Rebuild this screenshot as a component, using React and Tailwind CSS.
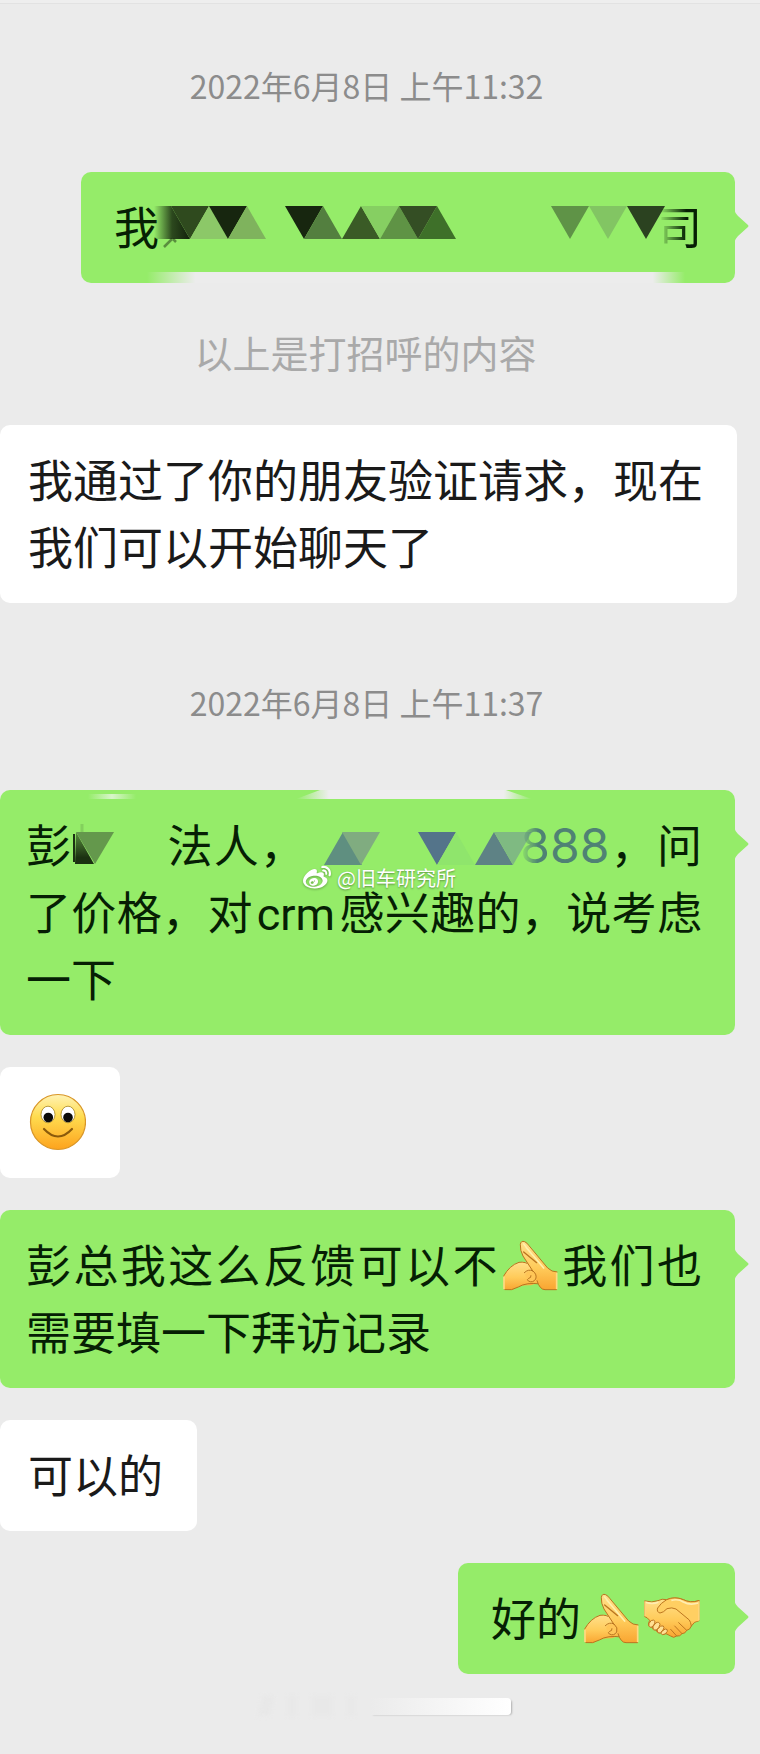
import { FaWeibo } from "react-icons/fa";

const FONT = "font-['Noto_Sans_CJK_SC','Noto_Sans',sans-serif]";

function Stamp({ children, className = "" }) {
  return <time className={`block pr-[2px] text-center text-[32px] leading-[48px] text-[#8c8c8c] ${className}`}>{children}</time>;
}

function Sent({ children, cut = false, overlay }) {
  return (
    <li className={`relative rounded-[10px] bg-[#95ec69] pt-[20px] pr-[33px] pb-[24px] text-[#061f04] ${cut ? "w-full pl-[26px]" : "self-end pl-[33px]"}`}>
      <svg className="absolute top-[37px] -right-[14px] h-[34px] w-[15px]" viewBox="0 0 15 34" aria-hidden="true">
        <path d="M0 0Q1 4 4 7L14 16Q15 17 14 18L4 27Q1 30 0 34Z" fill="#95ec69" />
      </svg>
      {overlay}
      <div>{children}</div>
    </li>
  );
}

function Received({ children, wide = false }) {
  return (
    <li className={`rounded-[10px] bg-white pt-[20px] pr-[34px] pb-[24px] pl-[28px] text-[#1a1a1a] ${wide ? "-mr-[2px] self-stretch" : "self-start"}`}>
      <p className="text-justify">{children}</p>
    </li>
  );
}

function Line({ children }) {
  return <p className="text-justify [text-align-last:justify]">{children}</p>;
}

// each entry: direction, left x, fill
function Tiles({ items, top }) {
  return items.map(([dir, x, fill]) => (
    <path
      key={`${dir}${x}`}
      fill={fill}
      d={dir === "down" ? `M${x} ${top}h38l-19 33z` : `M${x} ${top + 33}h38l-19 -33z`}
    />
  ));
}

const COMPANY_TILES = [
  ["down", 171, "#2f4a1e"],
  ["up", 190, "#8cc868"],
  ["down", 209, "#17260f"],
  ["up", 228, "#7fb35d"],
  ["down", 285, "#17260f"],
  ["up", 304, "#537f3f"],
  ["up", 342, "#3a5b26"],
  ["down", 361, "#86cf62"],
  ["up", 380, "#5f9345"],
  ["up", 418, "#3e7029"],
  ["down", 399, "#344e24"],
  ["down", 551, "#5f9347"],
  ["down", 589, "#82c563"],
  ["down", 627, "#2b4220"],
];

const PHONE_TILES = [
  ["up", 324, "#5f8f80"],
  ["down", 342, "#80ac80"],
  ["down", 418, "#54748a"],
  ["up", 437, "#8fe56c"],
  ["up", 475, "#5e8285"],
  ["down", 494, "#7fba82"],
];

function Gold({ id }) {
  return (
    <linearGradient id={id} x1="0" y1="0" x2="0" y2="1">
      <stop offset="0" stopColor="#ffe08c" />
      <stop offset="0.55" stopColor="#ffcb5a" />
      <stop offset="1" stopColor="#f9a531" />
    </linearGradient>
  );
}

function Fist({ id }) {
  return (
    <svg className="mr-[2px] ml-[3px] inline-block h-[67px] w-[55px] align-top" viewBox="0 -30 165 201" role="img" aria-label="抱拳">
      <defs><Gold id={id} /></defs>
      <g stroke="#b97420" strokeWidth="3" strokeLinejoin="round" strokeLinecap="round">
        <path fill={`url(#${id})`} stroke="none" d="M2 108Q20 76 48 67Q76 60 90 84L112 126L84 136Q50 134 28 150L4 149Z" />
        <path fill="none" d="M2 108Q20 76 48 67Q68 64 80 75M112 132Q70 126 46 141Q26 153 6 149" />
        <path fill={`url(#${id})`} stroke="none" d="M52 14Q53 1 65 5Q72 8 78 17L134 84Q146 96 162 96V149H122Q112 146 106 132L96 108L60 48Q51 31 52 14Z" />
        <path fill="none" d="M162 96Q146 96 134 84L78 17Q72 8 65 5Q53 1 52 14Q51 31 60 48L90 94M102 122Q110 149 126 149H160" />
        <path fill="none" d="M62 36L101 68" strokeWidth="4" />
        <path fill="#ffc658" stroke="none" d="M66 104Q74 89 88 95Q101 106 97 118Q86 132 73 122Z" />
        <path fill="none" d="M64 98Q76 86 90 93Q103 104 98 117Q90 130 76 123Q70 119 77 115Q85 114 84 107" />
      </g>
      <path d="M62 12Q67 17 71 24L122 84" fill="none" stroke="#fff0ae" strokeWidth="5" strokeLinecap="round" />
      <path d="M161 98V147M3 110V147" stroke="#ffd982" strokeWidth="5" />
    </svg>
  );
}

function Handshake() {
  return (
    <svg className="mr-[2px] ml-[3px] inline-block h-[67px] w-[56px] align-top" viewBox="0 -43 168 201" role="img" aria-label="握手">
      <defs><Gold id="shake" /></defs>
      <g stroke="#bd7620" strokeWidth="3" strokeLinejoin="round" strokeLinecap="round">
        <path fill="url(#shake)" d="M3 11Q24 17 42 10Q54 3 68 7Q94 -3 118 7Q138 18 165 10V70Q150 72 142 86Q138 98 128 99Q124 109 114 109Q108 118 98 116Q89 124 80 116L66 109Q56 114 50 106Q39 109 37 98Q25 100 25 90Q11 90 14 77L17 69Q9 59 3 58Z" />
        <path fill="#ffcf62" stroke="none" d="M68 7Q50 17 41 32Q37 44 48 47Q58 46 69 34Q84 29 96 35L136 68Q146 74 165 70V10Q138 18 118 7Q92 -4 68 7Z" />
        <path fill="none" d="M165 10Q138 18 118 7Q92 -4 68 7Q50 17 41 32Q37 44 48 47Q58 46 69 34Q84 29 96 35L136 68Q140 74 142 86M104 76L128 99M92 86L114 109M80 96L98 116" />
        <path fill="#ffe094" d="M23 69Q30 66 33 72Q34 78 25 89Q12 92 15 79ZM37 76Q46 72 48 81Q46 92 37 98Q25 99 27 88ZM51 86Q60 83 60 91Q57 103 49 107Q38 107 40 97ZM65 95Q72 95 70 102Q65 112 56 112Q48 110 53 102Z" />
      </g>
      <path d="M5 15Q25 22 43 15M82 9Q104 4 118 14Q138 25 163 17" stroke="#ffedb2" strokeWidth="5" fill="none" />
      <path d="M3 12V57M165 12V69" stroke="#ffd982" strokeWidth="4" />
    </svg>
  );
}

function Smile() {
  return (
    <svg className="inline-block h-[67px] w-[58px] align-top" viewBox="-1 -6 58 67" role="img" aria-label="微笑">
      <defs>
        <linearGradient id="face" x1="0" y1="0" x2="0" y2="1">
          <stop offset="0" stopColor="#fff3b5" />
          <stop offset="0.4" stopColor="#ffdc50" />
          <stop offset="1" stopColor="#fda31d" />
        </linearGradient>
      </defs>
      <circle cx="29" cy="29" r="27.5" fill="url(#face)" stroke="#d99628" strokeWidth="1.2" />
      <ellipse cx="19" cy="21.5" rx="7" ry="8.3" fill="#fff" stroke="#a5841f" strokeWidth="0.8" />
      <ellipse cx="39" cy="21.5" rx="7" ry="8.3" fill="#fff" stroke="#a5841f" strokeWidth="0.8" />
      <circle cx="19.3" cy="24.5" r="4.8" fill="#0b0b0b" />
      <circle cx="39" cy="24.5" r="4.8" fill="#0b0b0b" />
      <path d="M15 36Q29 51 43 36" fill="none" stroke="#8a5a0c" strokeWidth="2.2" strokeLinecap="round" />
    </svg>
  );
}

function Watermark() {
  return (
    <div className="absolute top-[73px] left-[303px] flex items-center gap-[6px] text-[20px] leading-[30px] text-white [text-shadow:0_1px_2px_rgb(0_0_0/0.4)]">
      <FaWeibo className="h-[28px] w-[28px] drop-shadow-[0_1px_1px_rgb(0_0_0/0.3)]" />
      <span className="whitespace-nowrap">@旧车研究所</span>
    </div>
  );
}

export default function App() {
  return (
    <main className={`min-h-screen overflow-hidden bg-[#ebebeb] pr-[25px] ${FONT}`}>
      <div className="-mr-[25px] h-[4px] border-b border-[#e2e2e2] bg-[#eeeeee]" />
      <Stamp className="mt-[57px] mb-[63px]">2022年6月8日 上午11:32</Stamp>

      <ol className="flex flex-col text-[45px] leading-[67px]">
        <Sent
          overlay={
            <div className="absolute right-[50px] bottom-0 left-[66px] h-[11px] bg-[linear-gradient(to_right,transparent,#ececec_9%,#ececec_94%,transparent)]" />
          }
        >
          我
          <svg className="inline-block h-[67px] w-[498px] overflow-visible align-top" viewBox="159 192 498 67" aria-hidden="true">
            <defs>
              <linearGradient id="smear" x1="0" x2="1">
                <stop offset="0" stopColor="#12200b" stopOpacity="0" />
                <stop offset="0.5" stopColor="#12200b" stopOpacity="0.8" />
                <stop offset="1" stopColor="#12200b" />
              </linearGradient>
            </defs>
            <path d="M154 206h17l19 33h-36z" fill="url(#smear)" />
            <Tiles items={COMPANY_TILES} top={206} />
            <path d="M172 239l-8 8M173 239l3 3" stroke="#12200b" strokeOpacity="0.45" strokeWidth="2.5" fill="none" />
          </svg>
          <span className="inline-block [mask-image:linear-gradient(to_right,transparent_5%,black_65%)]">司</span>
        </Sent>

        <li className="mt-[45px] mb-[49px] pr-[4px] text-center text-[38px] leading-[48px] text-[#a9a9a9]">以上是打招呼的内容</li>

        <Received wide>我通过了你的朋友验证请求，现在我们可以开始聊天了</Received>
      </ol>

      <Stamp className="mt-[75px] mb-[64px]">2022年6月8日 上午11:37</Stamp>

      <ol className="flex flex-col gap-[32px] text-[45px] leading-[67px]">
        <Sent
          cut
          overlay={
            <>
              <div className="absolute top-[4px] left-[88px] h-[5px] w-[48px] bg-linear-to-r from-transparent via-[#d9f5ca] to-transparent" />
              <svg className="absolute top-0 left-[296px] h-[9px] w-[236px]" viewBox="0 0 236 9" aria-hidden="true">
                <defs>
                  <linearGradient id="wipe">
                    <stop offset="0" stopColor="#eeeeee" stopOpacity="0" />
                    <stop offset="0.14" stopColor="#eeeeee" />
                    <stop offset="0.88" stopColor="#eeeeee" />
                    <stop offset="1" stopColor="#eeeeee" stopOpacity="0" />
                  </linearGradient>
                </defs>
                <path d="M24 0H210L236 9H0Z" fill="url(#wipe)" />
              </svg>
              <Watermark />
            </>
          }
        >
          <Line>
            彭
            <svg className="inline-block h-[67px] w-[94px] align-top" viewBox="72 810 94 67" aria-hidden="true">
              <defs>
                <linearGradient id="ink" x1="0" y1="0" x2="0" y2="1">
                  <stop offset="0" stopColor="#1b3111" stopOpacity="0.5" />
                  <stop offset="0.8" stopColor="#1b3111" />
                </linearGradient>
              </defs>
              <path d="M76 832l18 32h-19z" fill="url(#ink)" />
              <path d="M74 834v28" stroke="#1b3111" strokeWidth="2" />
              <path d="M82 824v8" stroke="#83d05d" strokeWidth="3" />
              <path d="M76 832h38l-19 32z" fill="#64984c" />
            </svg>
            法人，
            <svg className="inline-block h-[67px] w-[214px] overflow-visible align-top" viewBox="306 809 214 67" aria-hidden="true">
              <Tiles items={PHONE_TILES} top={831} />
            </svg>
            <a href="#phone" className="font-['Inter',sans-serif] text-[48px] leading-none text-[#4f8274]">
              <span className="[mask-image:linear-gradient(to_right,transparent,black_60%)]">8</span>88
            </a>
            ，问
          </Line>
          <Line>
            了价格，对<span className="mx-[4px] font-['Roboto',sans-serif] leading-none">crm</span>感兴趣的，说考虑
          </Line>
          <p>一下</p>
        </Sent>

        <Received><Smile /></Received>

        <Sent cut>
          <Line>彭总我这么反馈可以不<Fist id="fist-a" />我们也</Line>
          <p>需要填一下拜访记录</p>
        </Sent>

        <Received>可以的</Received>

        <Sent>好的<Fist id="fist-b" /><Handshake /></Sent>
      </ol>

      {/* wiped strip under the last message */}
      <div className="mt-[22px] ml-[240px] flex h-[20px] w-[271px] items-center gap-[16px]" aria-hidden="true">
        <div className="ml-[20px] h-full w-[12px] -skew-x-12 bg-[#e8e8e8] blur-[2px]" />
        <div className="h-full w-[8px] bg-[#e8e8e8] blur-[2px]" />
        <div className="h-full w-[20px] bg-[#e8e8e8] blur-[2px]" />
        <div className="h-full w-[6px] bg-[#e8e8e8] blur-[2px]" />
        <div className="h-[17px] flex-1 rounded-r-[4px] bg-linear-to-r from-[#ebebeb] to-white shadow-[2px_1px_2px_-1px_rgb(0_0_0/0.25)]" />
      </div>
    </main>
  );
}
